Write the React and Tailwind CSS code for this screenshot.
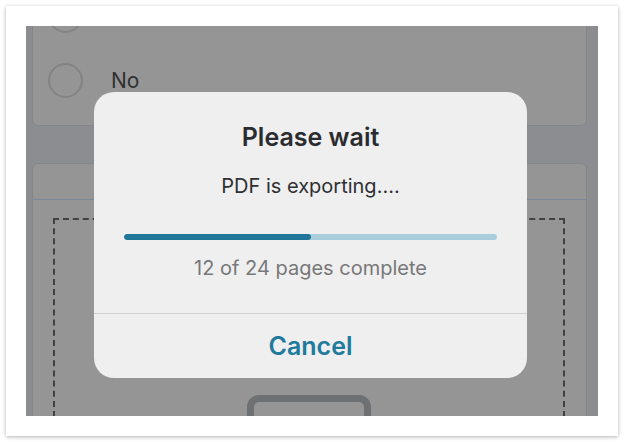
import React from 'react'

const FONT = { fontFamily: 'Inter, "Noto Sans", sans-serif' }

function Radio({ label }) {
  return (
    <div className="h-[65px] flex items-center pl-[15px]">
      <div className="w-[35px] h-[35px] rounded-full border-2 border-[#828384] shrink-0" />
      {label && <span className="ml-[28px] text-[21px] text-[#2f3133]">{label}</span>}
    </div>
  )
}

function ProgressDialog({ done, total }) {
  const pct = (done / total) * 100
  return (
    <div className="absolute left-[68px] top-[66px] w-[433px] rounded-[20px] bg-[#efefef] flex flex-col">
      <div className="flex flex-col items-center pt-[30px] px-[30px]">
        <h2 className="text-[25px] leading-[30px] font-semibold text-[#2a2c2f]">Please wait</h2>
        <p className="mt-[22px] text-[20px] leading-[24px] text-[#2e3033]">PDF is exporting....</p>
        <div className="mt-[36px] w-full h-[6px] rounded-full bg-[#a8cddc] overflow-hidden">
          <div className="h-full rounded-full bg-[#1f7899]" style={{ width: `${pct}%` }} />
        </div>
        <p className="mt-[16px] text-[20px] leading-[24px] text-[#777879]">
          {done} of {total} pages complete
        </p>
      </div>
      <div className="mt-[33px] border-t border-[#cfcfcf] h-[65px] flex items-center justify-center">
        <span className="text-[25px] leading-[30px] font-semibold text-[#207a9c]">Cancel</span>
      </div>
    </div>
  )
}

export default function App() {
  return (
    <div className="w-[624px] h-[442px] bg-white p-[6px]" style={FONT}>
      <div className="w-[612px] h-[430px] bg-white shadow-[0_1px_4px_rgba(0,0,0,0.3)] p-5">
        <div className="relative w-[572px] h-[390px] bg-[#8b8d90] overflow-hidden">
          {/* Page behind the overlay */}
          <div className="pl-[6px] pr-[11px] flex flex-col">
            <div className="-mt-[50px] h-[150px] rounded-[6px] border border-[#858687] bg-[#959595] pt-[6px]">
              <Radio />
              <Radio label="No" />
            </div>

            <div className="mt-[37px] rounded-[6px] border border-[#858687] bg-[#959595] flex flex-col">
              <div className="h-[36px] border-b border-[#7b889c]" />
              <div className="pt-[18px] pl-[20px] pr-[21px]">
                <div className="border-2 border-dashed border-[#3f4144] h-[260px] pt-[175px] flex justify-center">
                  <div className="w-[124px] h-[60px] rounded-[12px] border-[7px] border-[#6e7173]" />
                </div>
              </div>
            </div>
          </div>

          <ProgressDialog done={12} total={24} />
        </div>
      </div>
    </div>
  )
}
